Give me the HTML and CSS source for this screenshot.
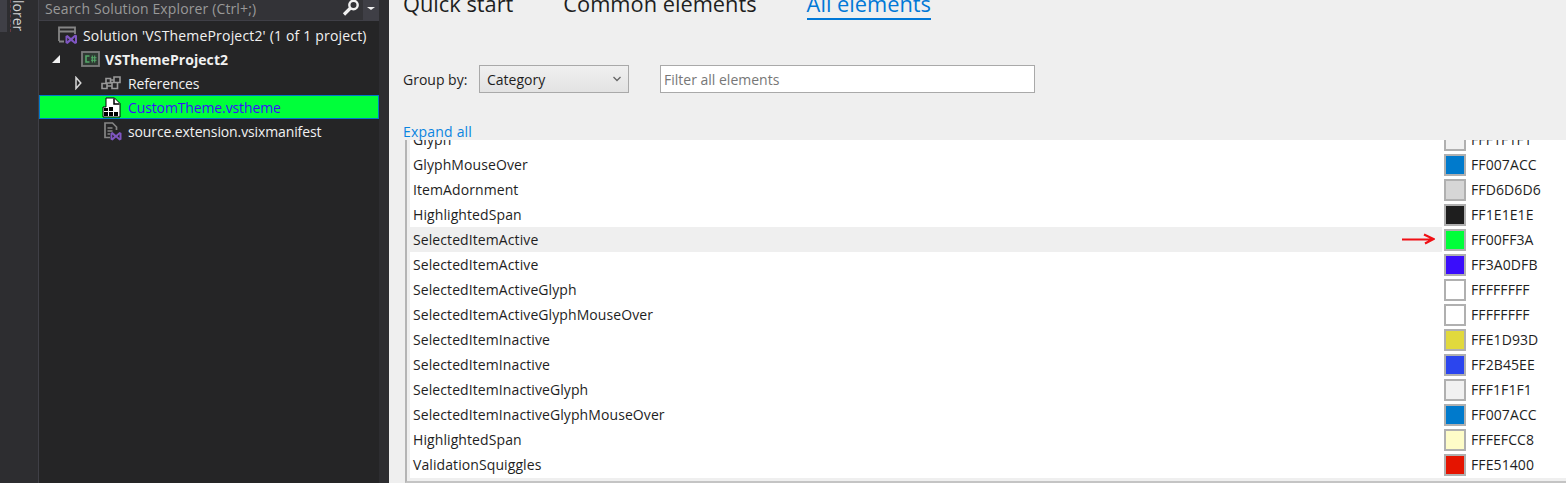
FILE: index.html
```html
<!DOCTYPE html>
<html lang="en">
<head>
  <meta charset="UTF-8">
  <title>Color Theme Editor</title>
  <link rel="stylesheet" href="styles.css">
</head>
<body>
  <div class="side-strip">
    <div class="side-tab"></div>
    <div class="side-label">lorer</div>
  </div>

  <div class="explorer">
    <div class="search-bar">
      <span class="search-text">Search Solution Explorer (Ctrl+;)</span>
      <svg class="search-icon" width="18" height="16" viewBox="0 0 18 16">
        <circle cx="11.500" cy="5" r="4.200" fill="none" stroke="#f1f1f1" stroke-width="2.400"/>
        <path d="M8.500 8 L2 14.500" stroke="#f1f1f1" stroke-width="3.200"/>
      </svg>
      <div class="search-drop"><div class="drop-arrow"></div></div>
    </div>

    <div class="tree">
      <div class="tree-row wide">
        <svg class="tree-icon solution-icon" width="20" height="19" viewBox="0 0 20 19">
          <path d="M1 15 V1.500 H17 V8 M1 5.500 H17 M1 15.500 H6" fill="none" stroke="#858585" stroke-width="1.800"/>
          <path d="M7.500 10 L9.500 9 L13 12 L17 8.500 L19 9.500 V17 L17 18 L13 15 L9.500 18 L7.500 17 Z M9.300 11.700 V15.300 L11.200 13.500 Z M17 11.300 L14.700 13.500 L17 15.700 Z" fill="#7f56c2" fill-rule="evenodd"/>
        </svg>
        <span>Solution 'VSThemeProject2' (1 of 1 project)</span>
      </div>
      <div class="tree-row bold">
        <div class="arrow-open"></div>
        <svg class="tree-icon project-icon" width="19" height="16" viewBox="0 0 19 16">
          <rect x="1" y="1" width="17" height="14" fill="#2f3a33" stroke="#7d7d7d" stroke-width="1.800"/>
          <path d="M8.500 5 H5 V11 H8.500" fill="none" stroke="#55a869" stroke-width="1.600"/>
          <path d="M11.300 4.500 V11.500 M13.700 4.500 V11.500 M10 6.800 H15.500 M10 9.200 H15.500" stroke="#55a869" stroke-width="1.100"/>
        </svg>
        <strong>VSThemeProject2</strong>
      </div>
      <div class="tree-row">
        <svg class="arrow-closed" width="7" height="14" viewBox="0 0 7 14">
          <path d="M1 1.500 L5.800 7 L1 12.500 Z" fill="none" stroke="#d8d8d8" stroke-width="1.500"/>
        </svg>
        <svg class="tree-icon refs-icon" width="20" height="14" viewBox="0 0 20 14">
          <path d="M1 7.500 H6 V12.500 H1 Z M5 2.500 H9.500 V7 H5 Z M13 1 H19 V6.500 H13 Z M11 6.500 H16.500 V12.500 H11 Z M6 10 H11 M9.500 4 H13" fill="none" stroke="#999" stroke-width="1.600"/>
        </svg>
        <span>References</span>
      </div>
      <div class="tree-row selected">
        <svg class="tree-icon file-icon" width="19" height="21" viewBox="0 0 19 21">
          <path d="M4 1 H12.500 L18 6.500 V20 H1 V10 H4 Z" fill="#fff" stroke="#000" stroke-width="1"/>
          <path d="M12 1.500 V7 H17.500" fill="none" stroke="#000" stroke-width="1.500"/>
          <rect x="2" y="11" width="4" height="3" fill="#000"/>
          <rect x="7" y="10" width="4" height="4" fill="#000"/>
          <rect x="2" y="15" width="4" height="4" fill="#000"/>
          <rect x="7" y="15" width="4" height="4" fill="#000"/>
          <rect x="12" y="15" width="4" height="4" fill="#000"/>
        </svg>
        <span>CustomTheme.vstheme</span>
      </div>
      <div class="tree-row">
        <svg class="tree-icon manifest-icon" width="18" height="19" viewBox="0 0 18 19">
          <path d="M6 15.500 H1 V1 H8.500 L12.500 5 V8" fill="none" stroke="#858585" stroke-width="1.700"/>
          <path d="M3.500 6 H8.500 M3.500 9 H8.500 M3.500 12 H6" stroke="#858585" stroke-width="1.300"/>
          <path d="M6.500 11 L8.500 10 L12 13 L15.500 10 L17.500 11 V17.500 L15.500 18.500 L12 15.500 L8.500 18.500 L6.500 17.500 Z M8.300 12.500 V16 L10.200 14.200 Z M15.500 12.300 L13.600 14.200 L15.500 16.200 Z" fill="#7f56c2" fill-rule="evenodd"/>
        </svg>
        <span>source.extension.vsixmanifest</span>
      </div>
    </div>
  </div>

  <div class="main">
    <div class="tabs">
      <span class="tab">Quick start</span>
      <span class="tab">Common elements</span>
      <span class="tab active">All elements</span>
    </div>

    <div class="filters">
      <span class="group-label">Group by:</span>
      <div class="select">
        <span>Category</span>
        <svg width="8" height="6" viewBox="0 0 8 6"><path d="M0.500 1 L4 4.500 L7.500 1" fill="none" stroke="#666" stroke-width="1.300"/></svg>
      </div>
      <div class="filter-input">Filter all elements</div>
    </div>

    <a class="expand-all">Expand all</a>

    <div class="list">
      <div class="list-inner">
        <div class="row"><span class="name">Glyph</span><span class="swatch sw-f1"></span><span class="hex">FFF1F1F1</span></div>
        <div class="row"><span class="name">GlyphMouseOver</span><span class="swatch sw-blue"></span><span class="hex">FF007ACC</span></div>
        <div class="row"><span class="name">ItemAdornment</span><span class="swatch sw-d6"></span><span class="hex">FFD6D6D6</span></div>
        <div class="row"><span class="name">HighlightedSpan</span><span class="swatch sw-1e"></span><span class="hex">FF1E1E1E</span></div>
        <div class="row hilite">
          <span class="name">SelectedItemActive</span>
          <svg class="red-arrow" width="34" height="12" viewBox="0 0 34 12">
            <path d="M1 6.500 H32 M23 1.500 L32.500 6 L24 10.500" fill="none" stroke="#f00f14" stroke-width="2.200"/>
          </svg>
          <span class="swatch sw-green"></span><span class="hex">FF00FF3A</span>
        </div>
        <div class="row"><span class="name">SelectedItemActive</span><span class="swatch sw-indigo"></span><span class="hex">FF3A0DFB</span></div>
        <div class="row"><span class="name">SelectedItemActiveGlyph</span><span class="swatch sw-white"></span><span class="hex">FFFFFFFF</span></div>
        <div class="row"><span class="name">SelectedItemActiveGlyphMouseOver</span><span class="swatch sw-white"></span><span class="hex">FFFFFFFF</span></div>
        <div class="row"><span class="name">SelectedItemInactive</span><span class="swatch sw-yellow"></span><span class="hex">FFE1D93D</span></div>
        <div class="row"><span class="name">SelectedItemInactive</span><span class="swatch sw-royal"></span><span class="hex">FF2B45EE</span></div>
        <div class="row"><span class="name">SelectedItemInactiveGlyph</span><span class="swatch sw-f1"></span><span class="hex">FFF1F1F1</span></div>
        <div class="row"><span class="name">SelectedItemInactiveGlyphMouseOver</span><span class="swatch sw-blue"></span><span class="hex">FF007ACC</span></div>
        <div class="row"><span class="name">HighlightedSpan</span><span class="swatch sw-cream"></span><span class="hex">FFFEFCC8</span></div>
        <div class="row"><span class="name">ValidationSquiggles</span><span class="swatch sw-red"></span><span class="hex">FFE51400</span></div>
      </div>
    </div>
  </div>
</body>
</html>
```

FILE: styles.css
```css
html, body {
  height: 100%;
  overflow: hidden;
}

body {
  margin: 0;
  display: flex;
  background-color: #efefef;
  font-family: "Open Sans", "Noto Sans", sans-serif;
  font-size: 14px;
}

/* dark left side */
.side-strip {
  display: flex;
  align-items: flex-start;
  width: 38px;
  flex-shrink: 0;
  background-color: #2d2d30;
  border-right: 1px solid #3f3f46;
}

.side-tab {
  width: 7px;
  height: 32px;
  background-color: #3f3f46;
}

.side-label {
  box-sizing: border-box;
  height: 32px;
  width: 15px;
  margin-left: 3px;
  border-left: 1px dashed #6b3a40;
  color: #d0d0d0;
  font-size: 14px;
  line-height: 14px;
  writing-mode: vertical-rl;
  overflow: hidden;
}

.explorer {
  width: 340px;
  flex-shrink: 0;
  background-color: #252526;
  color: #f1f1f1;
  border-right: 10px solid #2d2d30;
}

.search-bar {
  display: flex;
  align-items: flex-start;
  height: 20px;
  padding-left: 6px;
  background-color: #333337;
  border-bottom: 1px solid #3f3f46;
}

.search-text {
  flex: 1;
  color: #999;
  letter-spacing: 0.13px;
  line-height: 17px;
}

.search-icon {
  margin-right: 3px;
}

.search-drop {
  display: flex;
  justify-content: center;
  width: 16px;
  height: 20px;
  padding-top: 7px;
  box-sizing: border-box;
  background-color: #3f3f46;
}

.drop-arrow {
  border-left: 4px solid transparent;
  border-right: 4px solid transparent;
  border-top: 3px solid #f1f1f1;
}

.tree {
  padding-top: 2px;
}

.tree-row {
  display: flex;
  align-items: center;
  height: 24px;
  letter-spacing: -0.12px;
}

.tree-row.wide {
  letter-spacing: 0.18px;
}

.tree-row.bold {
  letter-spacing: 0.07px;
}

.tree-row .tree-icon {
  flex-shrink: 0;
}

.solution-icon {
  margin: 0 5px 0 19px;
}

.arrow-open {
  width: 0;
  height: 0;
  margin-left: 13px;
  border-left: 8px solid transparent;
  border-bottom: 8px solid #f1f1f1;
}

.project-icon {
  margin: 0 5px 0 21px;
}

.arrow-closed {
  margin-left: 36px;
}

.refs-icon {
  margin: 0 7px 0 19px;
}

.file-icon {
  margin: 0 7px 0 63px;
}

.manifest-icon {
  margin: 0 6px 0 65px;
}

.selected {
  background-color: #00ff3a;
  color: #3a0dfb;
  box-shadow: inset 0 0 0 1px #007acc;
}

.main {
  flex: 1;
  padding-left: 14px;
  min-width: 0;
  color: #1e1e1e;
}

.tabs {
  display: flex;
  gap: 50px;
  margin-top: -11px;
  height: 31px;
}

.tab {
  font-size: 21.8px;
  line-height: 29px;
  height: 29px;
}

.tab.active {
  color: #0078d7;
  border-bottom: 2px solid #0078d7;
}

.filters {
  display: flex;
  align-items: center;
  margin-top: 45px;
  height: 28px;
}

.group-label {
  width: 76px;
}

.select {
  display: flex;
  align-items: center;
  justify-content: space-between;
  box-sizing: border-box;
  width: 150px;
  height: 28px;
  padding: 0 7px 0 7px;
  background: linear-gradient(#f0f0f0, #e3e3e3);
  border: 1px solid #a9a9a9;
}

.filter-input {
  box-sizing: border-box;
  width: 375px;
  height: 28px;
  margin-left: 31px;
  padding-left: 3px;
  line-height: 28px;
  background-color: #fff;
  border: 1px solid #a9a9a9;
  color: #777;
}

.expand-all {
  display: block;
  margin-top: 29px;
  height: 20px;
  line-height: 20px;
  color: #0a84e0;
  letter-spacing: 0.2px;
}

.list {
  box-sizing: border-box;
  height: 343px;
  padding: 0 0 3px 3px;
  border-left: 2px solid #b4b4b4;
  border-bottom: 2px solid #c4c4c4;
  margin-left: 2px;
  margin-top: -2px;
}

.list-inner {
  height: 100%;
  overflow: hidden;
  background-color: #fff;
}

.row {
  position: relative;
  display: flex;
  align-items: center;
  height: 25px;
  letter-spacing: 0.09px;
}

.row:first-child {
  margin-top: -13px;
}

.name {
  flex: 1;
  align-self: stretch;
  line-height: 25px;
  padding-left: 3px;
  margin-right: 2px;
}

.hilite .name {
  background-color: #efefef;
}

.red-arrow {
  position: absolute;
  left: 991px;
  top: 6px;
}

.swatch {
  box-sizing: border-box;
  width: 22px;
  height: 22px;
  border: 2px solid #b0b0b0;
  flex-shrink: 0;
}

.hex {
  width: 100px;
  padding-left: 5px;
  box-sizing: border-box;
  flex-shrink: 0;
  letter-spacing: 0.1px;
}

.sw-f1 { background-color: #f1f1f1; }
.sw-blue { background-color: #007acc; }
.sw-d6 { background-color: #d6d6d6; }
.sw-1e { background-color: #1e1e1e; }
.sw-green { background-color: #00ff3a; }
.sw-indigo { background-color: #3a0dfb; }
.sw-white { background-color: #fff; }
.sw-yellow { background-color: #e1d93d; }
.sw-royal { background-color: #2b45ee; }
.sw-cream { background-color: #fefcc8; }
.sw-red { background-color: #e51400; }
```
